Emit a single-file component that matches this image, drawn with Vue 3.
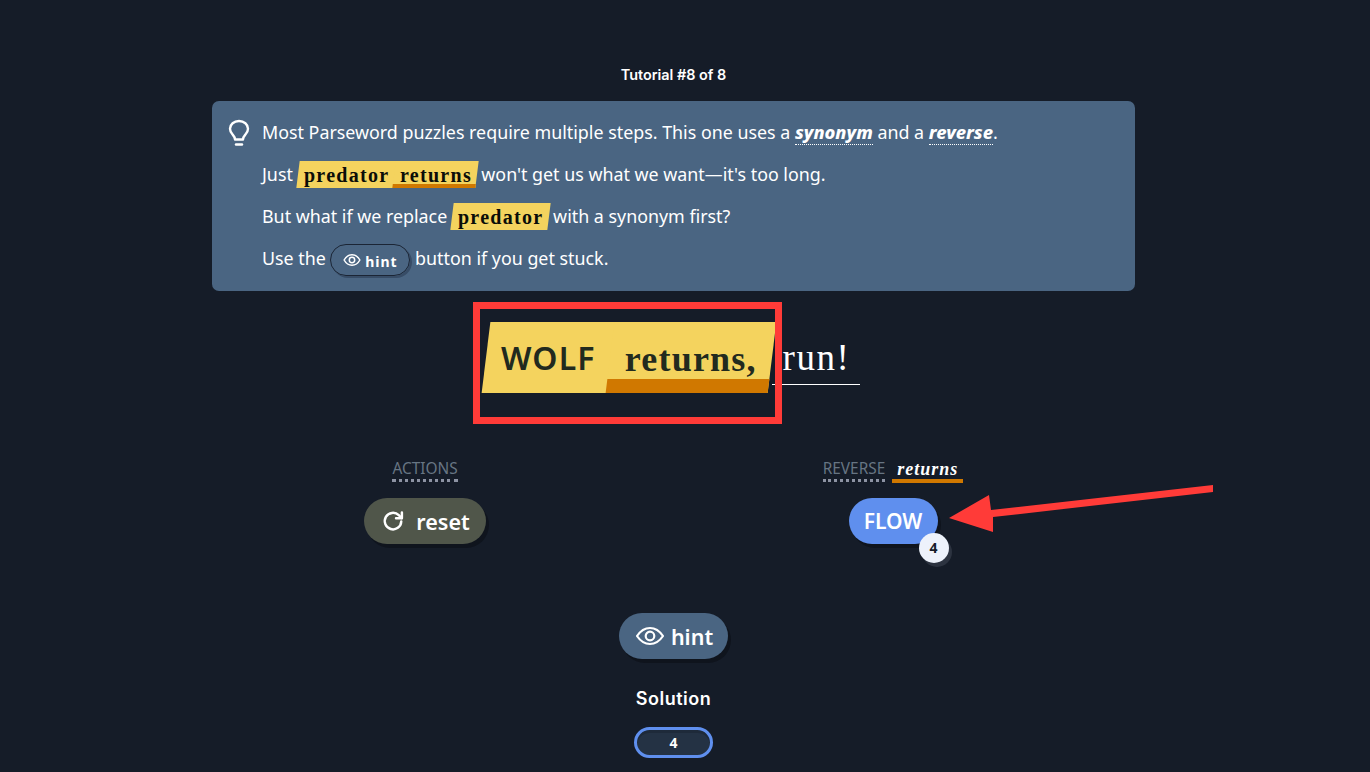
<script setup>
const tutorialTitle = 'Tutorial #8 of 8'
</script>

<template>
  <div class="page">
    <h1 class="title">{{ tutorialTitle }}</h1>

    <section class="tip">
      <svg class="bulb" width="24" height="28" viewBox="0 0 24 28" fill="none" stroke="currentColor" stroke-width="2.4" stroke-linecap="round" stroke-linejoin="round">
        <path d="M8 20.500c0-2.600-1.200-3.600-2.600-5.200C4 13.700 3 12 3 9.800 3 5.300 7 2 12 2s9 3.300 9 7.800c0 2.200-1 3.900-2.400 5.500-1.400 1.600-2.600 2.600-2.600 5.200z" />
        <path d="M9 25.500h6" />
      </svg>
      <div class="tip-text">
        <p>Most Parseword puzzles require multiple steps. This one uses a <em class="term">synonym</em> and a <em class="term">reverse</em>.</p>
        <p>Just <span class="mini"><span class="mini-word"><span>predator</span></span><span class="mini-word mini-mark"><span>returns</span></span></span> won't get us what we want—it's too long.</p>
        <p>But what if we replace <span class="mini"><span class="mini-word"><span>predator</span></span></span> with a synonym first?</p>
        <p>Use the <span class="mini-hint">
          <svg width="18" height="14" viewBox="0 0 24 18" fill="none" stroke="currentColor" stroke-width="2"><path d="M1.500 9C4 4.500 7.500 2 12 2s8 2.500 10.500 7c-2.500 4.500-6 7-10.500 7S4 13.500 1.500 9z" /><circle cx="12" cy="9" r="3.600" /></svg>
          <span class="mini-hint-text">hint</span></span> button if you get stuck.</p>
      </div>
    </section>

    <div class="clue">
      <div class="word"><span>WOLF</span></div>
      <div class="word word-serif"><span>returns,</span></div>
      <div class="rest">run!</div>
    </div>

    <div class="actions">
      <div class="group">
        <div class="labels"><span class="label">ACTIONS</span></div>
        <button class="btn btn-reset">
          <svg width="22" height="22" viewBox="0 0 24 24" fill="none" stroke="currentColor" stroke-width="2.700" stroke-linecap="round" stroke-linejoin="round"><path d="M21 12.500a9 9 0 1 1-2.700-6.800L21.500 8.800" /><path d="M21.700 2.600v6.400h-6.400" /></svg>
          reset
        </button>
      </div>
      <div class="group">
        <div class="labels">
          <span class="label">REVERSE</span>
          <span class="label-word">returns</span>
        </div>
        <button class="btn btn-flow">
          FLOW
          <span class="badge">4</span>
        </button>
      </div>
    </div>

    <button class="btn btn-hint">
      <svg width="28" height="20" viewBox="0 0 28 20" fill="none" stroke="currentColor" stroke-width="2.200"><path d="M1 10C4.700 4.500 9 2 14 2s9.300 2.500 13 8C23.300 15.500 19 18 14 18S4.700 15.500 1 10z" /><circle cx="14" cy="10" r="4.300" /></svg>
      hint
    </button>

    <div class="solution-title">Solution</div>
    <div class="solution">4</div>

    <div class="marker"></div>
    <svg class="arrow" width="270" height="50" viewBox="0 0 270 50">
      <path d="M1 34 41 11 43 26 265 1 265 8 45 33 45 48z" fill="#ff3b38" />
    </svg>
  </div>
</template>

<style scoped>
.page {
  position: relative;
  width: 1347px;
  height: 772px;
  overflow: hidden;
  background: #151c28;
  color: #fff;
  font-family: "Noto Sans", sans-serif;
  display: flex;
  flex-direction: column;
  align-items: center;
  padding-top: 66px;
  box-sizing: border-box;
}

.page > * {
  flex: none;
}

.title {
  margin: 0 0 17px;
  font-family: Inter, sans-serif;
  font-size: 14.4px;
  line-height: 18px;
  font-weight: 600;
}

.tip {
  width: 923px;
  height: 190px;
  box-sizing: border-box;
  background: #4a6582;
  border-radius: 7px;
  display: flex;
  gap: 11px;
  padding: 10px 18px;
}

.bulb {
  flex: none;
  margin-top: 8px;
  margin-left: -3px;
}

.tip-text p {
  margin: 0;
  height: 42px;
  font-size: 17.85px;
  white-space: pre-wrap;
  line-height: 42px;
}

.term {
  font-weight: 800;
  font-style: italic;
  border-bottom: 1px dotted #fff;
  font-size: 18.2px;
}

.mini {
  display: inline-flex;
  vertical-align: middle;
  margin-top: -3px;
  margin-right: 0.5px;
}

.mini-word {
  display: block;
  height: 27px;
  box-sizing: border-box;
  padding: 0 5px 0 6px;
  background: #f4d35e;
  color: #0b0d08;
  font-family: "Liberation Serif", serif;
  font-weight: 700;
  font-size: 20px;
  line-height: 28px;
  letter-spacing: 1.3px;
  transform: skewX(-7deg);
  margin-right: -0.5px;
}

.mini-word span {
  display: block;
  transform: skewX(7deg);
}

.mini-mark {
  border-bottom: 4px solid #d07800;
}

.mini-hint {
  display: inline-flex;
  align-items: center;
  justify-content: center;
  gap: 4px;
  box-sizing: border-box;
  width: 80px;
  height: 32px;
  vertical-align: middle;
  margin-top: 0;
  border: 1.5px solid #1b2535;
  border-radius: 16px;
  box-shadow: 2px 2px 0 #374c66;
  font-size: 14px;
  font-weight: 700;
  letter-spacing: 1px;
}

.mini-hint-text {
  line-height: 20px;
  margin-top: 3px;
}

.clue {
  display: flex;
  align-items: flex-start;
  margin-top: 31px;
  margin-right: 1px;
  height: 101px;
}

.word {
  height: 71px;
  box-sizing: border-box;
  background: #f4d35e;
  color: #222a1e;
  transform: skewX(-7deg);
  font-size: 32px;
  font-weight: 600;
  letter-spacing: 1.2px;
  line-height: 72px;
  padding: 0 15px;
  margin-right: -0.5px;
}

.word span {
  display: block;
  transform: skewX(7deg);
}

.word-serif {
  border-bottom: 14px solid #d07800;
  font-family: "Liberation Serif", serif;
  font-weight: 700;
  font-size: 36px;
  letter-spacing: 1.2px;
  line-height: 74px;
}

.rest {
  height: 63px;
  box-sizing: border-box;
  padding: 0 10px 0 11px;
  border-bottom: 1px solid #fff;
  font-family: "Liberation Serif", serif;
  font-size: 37px;
  letter-spacing: 1.5px;
  line-height: 72px;
}

.actions {
  display: grid;
  grid-template-columns: 426px 484px;
  column-gap: 13px;
  width: 923px;
  height: 154px;
  margin-top: 36px;
}

.group {
  display: flex;
  flex-direction: column;
  align-items: center;
}

.labels {
  display: flex;
  align-items: flex-start;
  gap: 7px;
  height: 39px;
}

.label {
  color: #677583;
  font-size: 15.4px;
  line-height: 20px;
  border-bottom: 3px dotted #8d93a3;
}

.label-word {
  color: #fff;
  font-family: "Liberation Serif", serif;
  font-weight: 700;
  font-style: italic;
  font-size: 18px;
  letter-spacing: 1px;
  line-height: 20px;
  padding: 0 5px;
  border-bottom: 4px solid #d07800;
}

.btn {
  position: relative;
  display: inline-flex;
  align-items: center;
  justify-content: center;
  gap: 12px;
  height: 46px;
  border: none;
  border-radius: 23px;
  color: #fff;
  font-family: "Noto Sans", sans-serif;
  font-size: 21.5px;
  font-weight: 600;
  box-shadow: 3px 4px 0 #0f141d;
  padding: 0;
}

.btn-reset {
  width: 122px;
  background: #50564a;
  padding-left: 2px;
}

.btn-flow {
  width: 89px;
  background: #5f8fee;
  font-size: 21px;
}

.badge {
  position: absolute;
  right: -11px;
  bottom: -19px;
  width: 30px;
  height: 30px;
  border-radius: 50%;
  background: #edf2fb;
  color: #151c28;
  font-size: 14px;
  font-weight: 700;
  line-height: 30px;
  text-align: center;
  box-shadow: 3px 4px 0 #2c3340;
}

.btn-hint {
  width: 109px;
  background: #4a6582;
  gap: 7px;
  padding-left: 2px;
}

.solution-title {
  margin-top: 29px;
  font-family: Inter, sans-serif;
  font-size: 18px;
  font-weight: 600;
  letter-spacing: 0.5px;
  line-height: 22px;
}

.solution {
  margin-top: 17px;
  width: 79px;
  height: 31px;
  box-sizing: border-box;
  border: 3px solid #5f8fee;
  border-radius: 16px;
  background: #243244;
  box-shadow: inset 0 3px 0 #1e2a3a;
  font-size: 14px;
  font-weight: 700;
  line-height: 26px;
  text-align: center;
}

.marker {
  position: absolute;
  left: 473px;
  top: 302px;
  width: 309px;
  height: 122px;
  box-sizing: border-box;
  border: 7px solid #ff3b38;
}

.arrow {
  position: absolute;
  left: 948px;
  top: 484px;
}
</style>

<style>
html, body {
  margin: 0;
  background: #151c28;
}
</style>
